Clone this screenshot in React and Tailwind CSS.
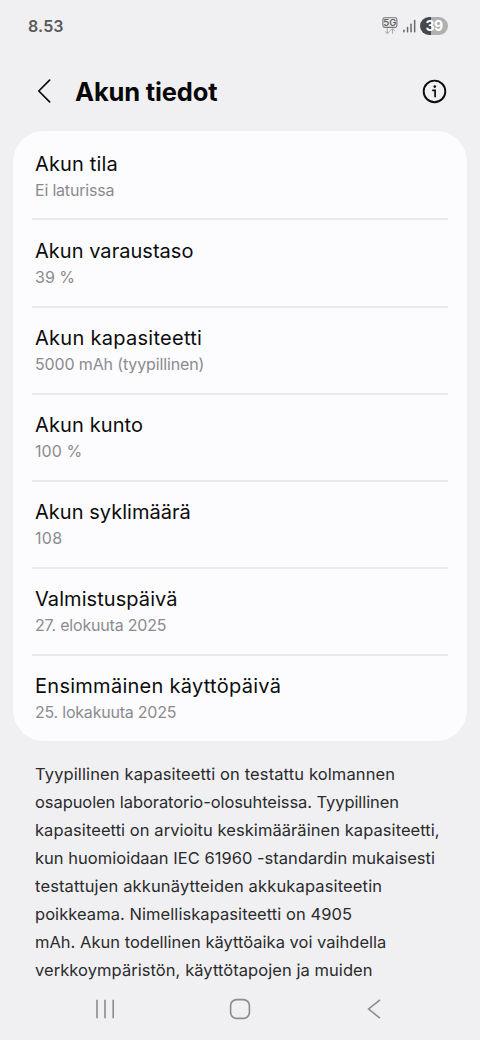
import React from "react";

const rows = [
  { title: "Akun tila", ts: "tracking-[0.15px]", value: "Ei laturissa", vs: "tracking-[-0.2px]" },
  { title: "Akun varaustaso", ts: "tracking-[0.03px]", value: "39 %", vs: "tracking-[0px]" },
  { title: "Akun kapasiteetti", ts: "tracking-[0.28px]", value: "5000 mAh (tyypillinen)", vs: "tracking-[-0.14px]" },
  { title: "Akun kunto", ts: "tracking-[0.12px]", value: "100 %", vs: "tracking-[0.1px]" },
  { title: "Akun syklimäärä", ts: "tracking-[0.03px]", value: "108", vs: "tracking-[0.3px]" },
  { title: "Valmistuspäivä", ts: "tracking-[0.07px]", value: "27. elokuuta 2025", vs: "tracking-[-0.19px]" },
  { title: "Ensimmäinen käyttöpäivä", ts: "tracking-[0.27px]", value: "25. lokakuuta 2025", vs: "tracking-[-0.22px]" },
];

const note = [
  ["Tyypillinen kapasiteetti on testattu kolmannen", "tracking-[0.12px]"],
  ["osapuolen laboratorio-olosuhteissa. Tyypillinen", "tracking-[-0.08px]"],
  ["kapasiteetti on arvioitu keskimääräinen kapasiteetti,", "tracking-[0.06px]"],
  ["kun huomioidaan IEC 61960 -standardin mukaisesti", "tracking-[0.02px]"],
  ["testattujen akkunäytteiden akkukapasiteetin", "tracking-[0.14px]"],
  ["poikkeama. Nimelliskapasiteetti on 4905", "tracking-[0.06px]"],
  ["mAh. Akun todellinen käyttöaika voi vaihdella", "tracking-[0.01px]"],
  ["verkkoympäristön, käyttötapojen ja muiden", "tracking-[0.06px]"],
];

function StatusBar() {
  return (
    <div className="flex h-[53px] items-center justify-between pl-[28px] pr-[32px]">
      <span className="text-[16px] font-semibold leading-[53px] tracking-[0.15px] text-[#59595b]">8.53</span>
      <div className="flex items-center">
        <svg width="17" height="20" viewBox="0 0 17 20" fill="none" className="mr-[4px] -mt-[2px]">
          <rect x="0.9" y="1.8" width="14" height="9.6" rx="1.8" stroke="#747476" strokeWidth="1.1" />
          <text x="7.9" y="10" textAnchor="middle" fontFamily="Inter, sans-serif" fontSize="9.5" fontWeight="600" fill="#5f5f61">5G</text>
          <path d="M5.3 12.4v5.2M3 15.4l2.3 2.2 2.3-2.2M10.6 17.8v-5.2M8.3 14.8l2.3-2.2 2.3 2.2" stroke="#a6a6a8" strokeWidth="1" />
        </svg>
        <svg width="13" height="14" viewBox="0 0 13 14" className="mr-[4px] -mt-[1px]" fill="#69696b">
          <rect x="0.2" y="10.6" width="1.5" height="2.8" rx=".6" />
          <rect x="3.8" y="7.8" width="1.5" height="5.6" rx=".6" />
          <rect x="7.3" y="4.6" width="1.5" height="8.8" rx=".6" />
          <rect x="10.9" y="0.8" width="1.5" height="12.6" rx=".6" />
        </svg>
        <div className="-mt-[1px] flex h-[18px] w-[28px] items-center justify-center rounded-full bg-[linear-gradient(90deg,#48484a_39%,#b0b0b2_39%)] text-[14px] font-bold leading-none tracking-[-0.5px] text-white">
          39
        </div>
      </div>
    </div>
  );
}

export default function App() {
  return (
    <div className="flex h-[1040px] w-[480px] flex-col overflow-hidden bg-[#f0f0f2] font-['Inter',sans-serif]">
      <StatusBar />
      <header className="flex h-[78px] items-center pl-[37px] pr-[33px]">
        <svg width="15" height="24" viewBox="0 0 15 24" fill="none" className="-mt-[2px] mr-[23px]">
          <path d="M12.6 1.1L1.8 12l10.8 10.9" stroke="#0a0a0a" strokeWidth="1.7" strokeLinecap="round" strokeLinejoin="round" />
        </svg>
        <h1 className="flex-1 text-[25.5px] font-bold leading-[34px] tracking-[-0.15px] text-[#080808]">Akun tiedot</h1>
        <svg width="25" height="25" viewBox="0 0 25 25" fill="none" className="-mt-[2px]">
          <circle cx="12.5" cy="12.4" r="10.8" stroke="#0c0c0c" strokeWidth="1.9" />
          <circle cx="12.8" cy="7.6" r="1.3" fill="#0c0c0c" />
          <path d="M10.2 11.3h2.9v7" stroke="#0c0c0c" strokeWidth="1.7" />
        </svg>
      </header>

      <main className="ml-[12.5px] mr-[12.7px] flex h-[610px] shrink-0 flex-col rounded-[31px] bg-[#fcfcfe] pl-[19.5px] pr-[19.3px]">
        {rows.map((r, i) => (
          <section
            key={r.title}
            className={"flex flex-1 flex-col pl-[3px] " + (i ? "border-t-2 border-[#e9e9eb] pt-[16.6px]" : "pt-[19px]")}
          >
            <div className={"text-[20px] leading-[28px] text-[#0c0c0d] " + r.ts}>{r.title}</div>
            <div className={"text-[16px] leading-[24px] text-[#8b8b8e] " + r.vs}>{r.value}</div>
          </section>
        ))}
      </main>

      <div className="flex h-[237px] shrink-0 flex-col pl-[35px] pt-[19px]">
        {note.map(([text, spacing]) => (
          <div key={text} className={"whitespace-nowrap text-[16.5px] leading-[28px] text-[#2b2b2d] " + spacing}>
            {text}
          </div>
        ))}
      </div>

      <nav className="flex h-[62px] items-center justify-between pl-[95px] pr-[98px]">
        <svg width="20" height="20" viewBox="0 0 20 20" stroke="#8c8c8e" strokeWidth="1.6">
          <path d="M2 .7v18.6M10 .7v18.6M18.2 .7v18.6" />
        </svg>
        <svg width="22" height="22" viewBox="0 0 22 22" fill="none" className="mr-[3px]">
          <rect x="1.6" y="1.6" width="18.8" height="18.8" rx="6" stroke="#8c8c8e" strokeWidth="1.6" />
        </svg>
        <svg width="15" height="20" viewBox="0 0 15 20" fill="none">
          <path d="M13 .8L1.6 10 13 19.2" stroke="#8c8c8e" strokeWidth="1.6" />
        </svg>
      </nav>
    </div>
  );
}
